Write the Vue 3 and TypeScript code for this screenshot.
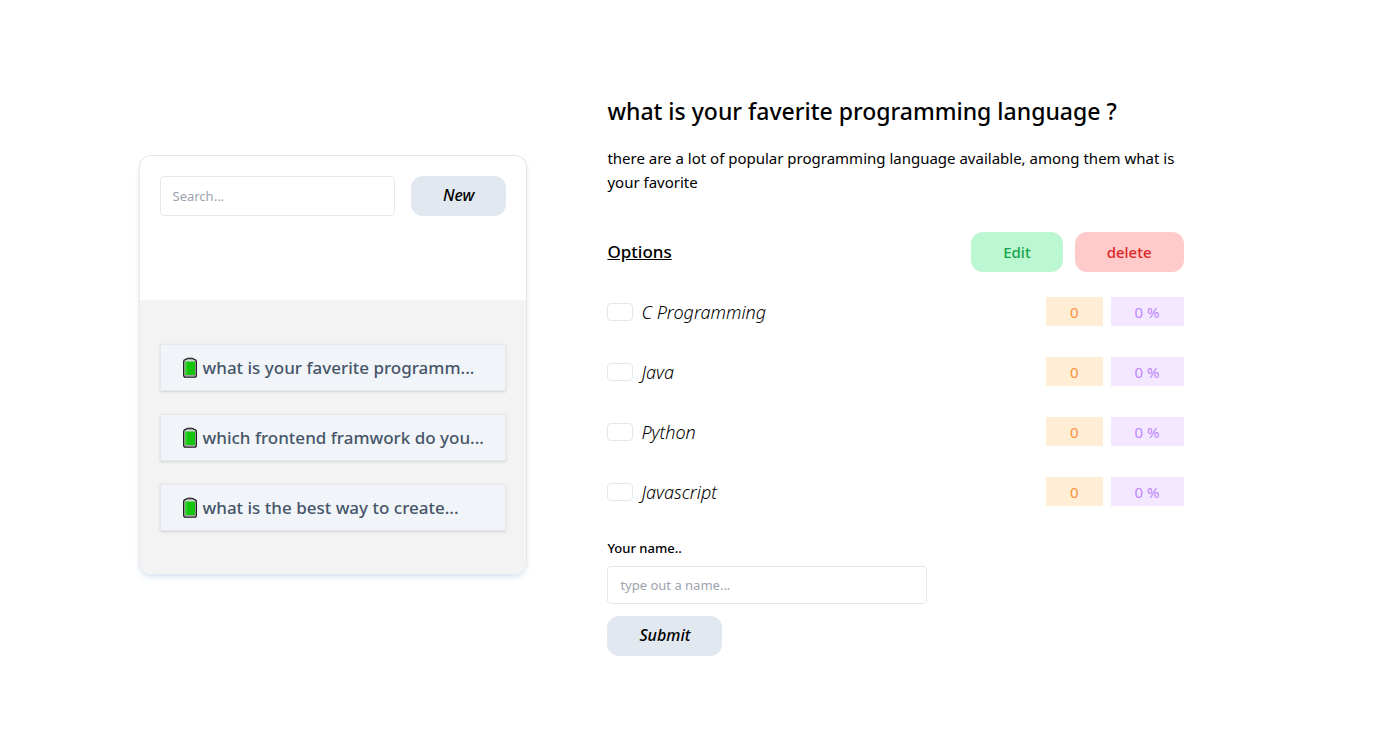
<script setup lang="ts">
import { computed, ref } from 'vue'

interface Option {
  id: string
  label: string
  votes: number
}

const polls: string[] = [
  'what is your faverite programm...',
  'which frontend framwork do you...',
  'what is the best way to create...',
]

const options: Option[] = [
  { id: 'c', label: 'C Programming', votes: 0 },
  { id: 'java', label: 'Java', votes: 0 },
  { id: 'python', label: 'Python', votes: 0 },
  { id: 'javascript', label: 'Javascript', votes: 0 },
]

const search = ref('')
const voter = ref('')
const selected = ref('')

const total = computed(() => options.reduce((sum, o) => sum + o.votes, 0))
const percent = (o: Option): number =>
  total.value === 0 ? 0 : Math.round((o.votes / total.value) * 100)
</script>

<template>
  <main class="page">
    <aside class="card">
      <div class="card-head">
        <input v-model="search" class="field search" type="text" placeholder="Search..." aria-label="Search" />
        <button class="btn primary" type="button">New</button>
      </div>
      <div class="poll-list">
        <button v-for="poll in polls" :key="poll" class="poll" type="button">
          <svg class="battery" viewBox="0 0 14 21" aria-hidden="true">
            <path d="M.7 4.500Q.7 3 2.200 2.700L4 1.700h6l1.800 1Q13.300 3 13.300 4.500v13.700q0 2-1.800 2h-9q-1.800 0-1.800-2z" fill="#d4d6d4" stroke="#171717" stroke-width="1.300" />
            <path d="M4.500 1h5" stroke="#666" stroke-width="1" />
            <path d="M2 4.500h10v13.500H2z" fill="#16c60c" />
            <path d="M3 5v13" stroke="#61d95b" stroke-width="1" />
            <path d="M2 18.800h10" stroke="#8a8a8a" stroke-width="1" />
          </svg>
          <span>{{ poll }}</span>
        </button>
      </div>
    </aside>

    <section class="detail">
      <h1 class="title">what is your faverite programming language ?</h1>
      <p class="description">
        there are a lot of popular programming language available, among them what is your favorite
      </p>

      <div class="toolbar">
        <h2 class="subtitle">Options</h2>
        <div class="actions">
          <button class="btn edit" type="button">Edit</button>
          <button class="btn delete" type="button">delete</button>
        </div>
      </div>

      <form @submit.prevent>
        <div v-for="option in options" :key="option.id" class="option">
          <input :id="option.id" v-model="selected" class="pick" type="radio" name="option" :value="option.id" />
          <label class="option-label" :for="option.id">{{ option.label }}</label>
          <span class="badge votes">{{ option.votes }}</span>
          <span class="badge share">{{ percent(option) }} %</span>
        </div>

        <label class="name-label" for="voter">Your name..</label>
        <input id="voter" v-model="voter" class="field name" type="text" placeholder="type out a name..." />
        <button class="btn primary submit" type="submit">Submit</button>
      </form>
    </section>
  </main>
</template>

<style>
body {
  margin: 0;
  background: #fff;
}
</style>

<style scoped>
.page,
.page * {
  box-sizing: border-box;
}

.page {
  display: flex;
  align-items: flex-start;
  gap: 80px;
  width: 80%;
  margin: 0 auto;
  padding: 95px 0 80px;
  color: #000;
  font-family: 'Segoe UI', 'Noto Sans', sans-serif;
  font-size: 15px;
  line-height: 24px;
}

button,
input {
  margin: 0;
  font-family: inherit;
}

.card {
  width: 35.1%;
  margin-top: 60px;
  overflow: hidden;
  border: 1px solid #e5e7eb;
  border-bottom: 0;
  border-radius: 12px;
  box-shadow: 0 4px 6px -1px #dbe6f0, 0 2px 4px -2px #dbe6f0;
}

.card-head {
  display: flex;
  gap: 16px;
  padding: 20px 20px 84px;
}

.field {
  padding: 0 12px;
  border: 1px solid #e5e7eb;
  border-radius: 4px;
  background: #fff;
  color: #000;
  font-size: 13px;
  line-height: 20px;
}

.field::placeholder {
  color: #9ca3af;
  opacity: 1;
}

.search {
  flex: 1;
  min-width: 0;
  height: 40px;
}

.btn {
  height: 40px;
  padding: 0 32px;
  border: 0;
  border-radius: 12px;
  font-size: 15px;
  font-weight: 500;
  line-height: 24px;
  cursor: pointer;
}

.primary {
  padding-bottom: 2px;
  background: #e2e8f0;
  color: #000;
  font-size: 16px;
  font-style: italic;
}

.poll-list {
  display: flex;
  flex-direction: column;
  gap: 23px;
  padding: 44px 20px 43px;
  background: #f3f3f3;
}

.poll {
  display: flex;
  align-items: center;
  gap: 6px;
  width: 100%;
  height: 47px;
  padding: 0 22px;
  border: 1px solid #e5e7eb;
  background: #f1f5f9;
  box-shadow: 0 1px 3px rgba(0, 0, 0, 0.1), 0 1px 2px -1px rgba(0, 0, 0, 0.1);
  color: #475569;
  font-size: 17px;
  font-weight: 500;
  line-height: 28px;
  text-align: left;
  white-space: nowrap;
  cursor: pointer;
}

.battery {
  flex: none;
  width: 14px;
  height: 21px;
}

.detail {
  width: 52%;
}

.title {
  margin: 0 0 19px;
  font-size: 23px;
  font-weight: 500;
  line-height: 32px;
}

.description {
  margin: 0 0 38px;
}

.toolbar {
  display: flex;
  align-items: center;
  justify-content: space-between;
  margin-bottom: 10px;
}

.subtitle {
  margin: 0;
  font-size: 17px;
  font-weight: 500;
  line-height: 28px;
  text-decoration: underline;
}

.actions {
  display: flex;
  gap: 12px;
}

.edit {
  background: #bbf7d0;
  color: #16a34a;
}

.delete {
  background: #fecaca;
  color: #dc2626;
}

.option {
  display: flex;
  align-items: center;
  gap: 8px;
  height: 60px;
}

.pick {
  appearance: none;
  width: 26px;
  height: 18px;
  border: 1px solid #e5e7eb;
  border-radius: 4px;
  background: #fff;
}

.option-label {
  flex: 1;
  font-size: 18px;
  font-style: italic;
  font-weight: 300;
  line-height: 28px;
}

.badge {
  margin-bottom: 1px;
  padding: 3px 24px 2px;
}

.votes {
  background: #ffedd5;
  color: #fb923c;
}

.share {
  background: #f3e8ff;
  color: #c084fc;
}

.name-label {
  display: block;
  margin: 16px 0 8px;
  font-size: 13px;
  font-weight: 500;
  line-height: 20px;
}

.name {
  display: block;
  width: 320px;
  height: 38px;
  margin-bottom: 12px;
}
</style>
